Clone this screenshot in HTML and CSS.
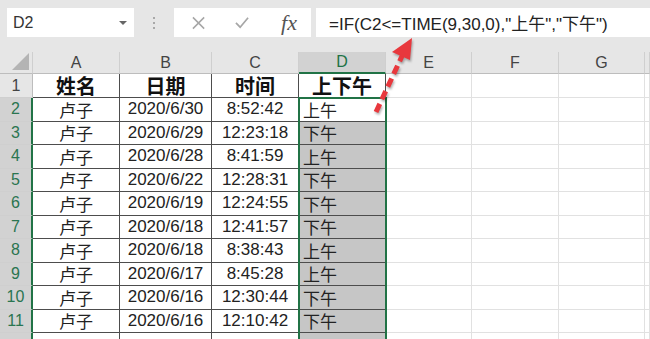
FILE: index.html
```html
<!DOCTYPE html>
<html lang="zh-CN">
<head>
    <meta charset="UTF-8">
    <title>上下午判断</title>
    <link rel="stylesheet" href="styles.css">
</head>
<body>
    <div class="ribbon">
        <div class="namebox">
            <span>D2</span>
            <span class="caret"></span>
        </div>
        <div class="grip"><i></i><i></i><i></i></div>
        <div class="fx-buttons">
            <svg class="icon" width="14" height="14" viewBox="0 0 14 14">
                <path d="M1 1 L13 13 M13 1 L1 13" stroke="#a6a6a6" stroke-width="1.6" fill="none"/>
            </svg>
            <svg class="icon" width="15" height="13" viewBox="0 0 15 13">
                <path d="M1 7 L5.5 11.5 L14 1.5" stroke="#a6a6a6" stroke-width="1.8" fill="none"/>
            </svg>
            <span class="fx">fx</span>
        </div>
        <div class="formula">=IF(C2&lt;=TIME(9,30,0),"上午","下午")</div>
    </div>

    <div class="sheet" id="sheet"></div>

    <svg class="arrow" width="650" height="339" viewBox="0 0 650 339">
        <path d="M376 112 L403 54" stroke="#e8383d" stroke-width="5" stroke-dasharray="9 5" fill="none"/>
        <polygon points="412,38 392,52 410,60" fill="#e8383d"/>
    </svg>

    <script>
        // 表格数据
        const rows = [
            ['卢子', '2020/6/30', '8:52:42', '上午'],
            ['卢子', '2020/6/29', '12:23:18', '下午'],
            ['卢子', '2020/6/28', '8:41:59', '上午'],
            ['卢子', '2020/6/22', '12:28:31', '下午'],
            ['卢子', '2020/6/19', '12:24:55', '下午'],
            ['卢子', '2020/6/18', '12:41:57', '下午'],
            ['卢子', '2020/6/18', '8:38:43', '上午'],
            ['卢子', '2020/6/17', '8:45:28', '上午'],
            ['卢子', '2020/6/16', '12:30:44', '下午'],
            ['卢子', '2020/6/16', '12:10:42', '下午']
        ];
        // H列只露出一条边，不显示字母
        const letters = ['A', 'B', 'C', 'D', 'E', 'F', 'G', ''];
        const sheet = document.getElementById('sheet');

        function cell(cls, text) {
            const div = document.createElement('div');
            div.className = cls;
            div.textContent = text || '';
            sheet.appendChild(div);
        }

        // 列标题
        cell('corner');
        letters.forEach(l => cell(l === 'D' ? 'hd sel' : 'hd', l));

        // 第1行
        cell('rn', '1');
        ['姓名', '日期', '时间', '上下午'].forEach(t => cell('c t head', t));
        for (let i = 0; i < 4; i++) cell('c');

        // 数据行
        rows.forEach((r, i) => {
            cell('rn sel', String(i + 2));
            cell('c t', r[0]);
            cell('c t', r[1]);
            cell('c t', r[2]);
            cell(i === 0 ? 'c t left' : 'c t left fill', r[3]);
            for (let j = 0; j < 4; j++) cell('c');
        });

        // 第12行（只露出顶部）
        cell('rn sel');
        for (let j = 0; j < 3; j++) cell('c t');
        cell('c t fill');
        for (let j = 0; j < 4; j++) cell('c');

        // 选区边框
        const frame = document.createElement('div');
        frame.className = 'selection';
        sheet.appendChild(frame);
    </script>
</body>
</html>
```

FILE: styles.css
```css
body {
    margin: 0;
    padding: 0;
    width: 650px;
    height: 339px;
    overflow: hidden;
    position: relative;
    background: #e6e6e6;
    font-family: "Liberation Sans", "Noto Sans CJK SC", sans-serif;
    color: #222;
}
.ribbon {
    height: 52px;
    display: flex;
    align-items: flex-start;
    padding-top: 8px;
    box-sizing: border-box;
}
.namebox {
    margin-left: 7px;
    width: 127px;
    height: 29px;
    background: white;
    display: flex;
    align-items: center;
    justify-content: space-between;
    padding: 0 7px 0 6px;
    box-sizing: border-box;
    font-size: 16px;
    color: #333;
}
.caret {
    width: 0;
    height: 0;
    border-left: 4px solid transparent;
    border-right: 4px solid transparent;
    border-top: 4px solid #666;
}
.grip {
    width: 40px;
    height: 29px;
    display: flex;
    flex-direction: column;
    align-items: center;
    justify-content: center;
    gap: 3px;
}
.grip i {
    width: 2px;
    height: 2px;
    background: #a8a8a8;
}
.fx-buttons {
    width: 137px;
    height: 29px;
    background: white;
    display: flex;
    align-items: center;
    padding: 0 14px 0 18px;
    box-sizing: border-box;
    gap: 30px;
}
.fx {
    font-family: "Liberation Serif", serif;
    font-style: italic;
    font-size: 22px;
    color: #555;
    margin-left: 2px;
}
.formula {
    flex: 1;
    margin-left: 5px;
    height: 29px;
    background: white;
    display: flex;
    align-items: center;
    padding-left: 13px;
    font-size: 17px;
    color: #222;
    white-space: nowrap;
}
.sheet {
    position: relative;
    display: grid;
    grid-template-columns: 33px 87px 92px 87px 87px 86px 87px 86px 1fr;
    grid-template-rows: 22px 24px;
    grid-auto-rows: 23.5px;
    background: white;
}
.sheet > div {
    box-sizing: border-box;
    display: flex;
    align-items: center;
    justify-content: center;
    overflow: hidden;
    white-space: nowrap;
}
.corner {
    background: #e6e6e6;
    border-right: 1px solid #cfcfcf;
    border-bottom: 1px solid #bdbdbd;
    position: relative;
}
.corner::after {
    content: "";
    position: absolute;
    right: 3px;
    bottom: 3px;
    border-left: 17px solid transparent;
    border-bottom: 17px solid #b4b4b4;
}
.hd {
    background: #e6e6e6;
    border-right: 1px solid #cfcfcf;
    border-bottom: 1px solid #bdbdbd;
    font-size: 16px;
    color: #444;
}
.hd.sel {
    background: #d2d2d2;
    color: #217346;
    border-bottom: 2px solid #217346;
}
.rn {
    background: #e6e6e6;
    border-right: 1px solid #bdbdbd;
    border-bottom: 1px solid #cfcfcf;
    font-size: 16px;
    color: #444;
}
.rn.sel {
    background: #d2d2d2;
    color: #2a7550;
    border-right: 2px solid #217346;
}
.c {
    border-right: 1px solid #e1e1e1;
    border-bottom: 1px solid #e1e1e1;
    font-size: 17px;
}
.c.t {
    border-right: 1px solid #4d4d4d;
    border-bottom: 1px solid #4d4d4d;
    color: #222;
}
.c.head {
    font-size: 20px;
    font-weight: bold;
    color: #111;
}
.c.left {
    justify-content: flex-start;
    padding-left: 4px;
}
.c.fill {
    background: #c6c6c6;
}
.sheet > .selection {
    position: absolute;
    left: 298px;
    top: 45px;
    width: 89px;
    height: 260px;
    border: 2px solid #217346;
    pointer-events: none;
}
.arrow {
    position: absolute;
    left: 0;
    top: 0;
    pointer-events: none;
    filter: drop-shadow(1px 2px 1px rgba(0, 0, 0, 0.3));
}
```
